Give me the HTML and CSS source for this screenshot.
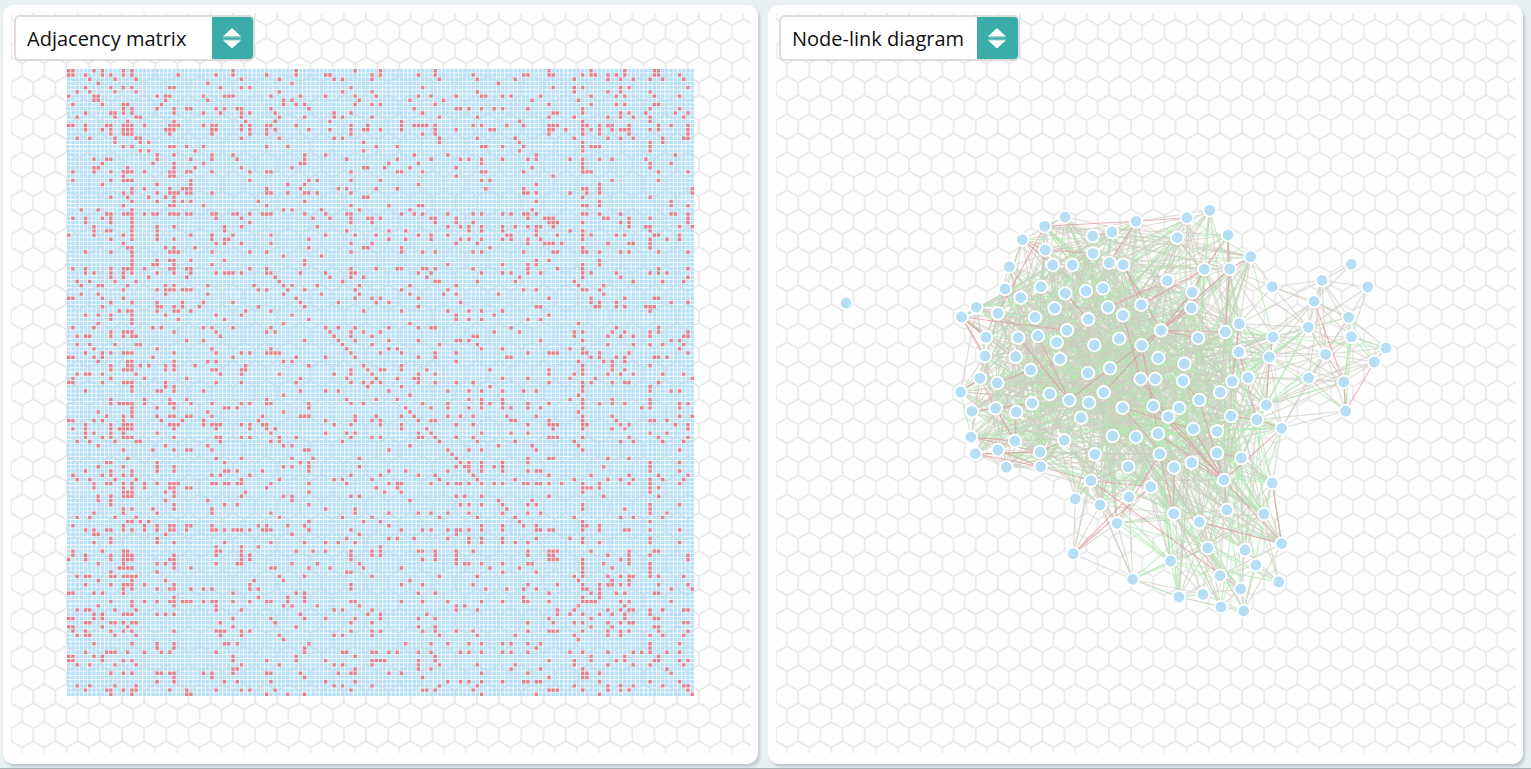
FILE: index.html
```html
<!DOCTYPE html>
<html lang="en">
<head>
<meta charset="utf-8">
<title>Graph views</title>
<link rel="stylesheet" href="styles.css">
</head>
<body>
<main class="views">
  <section class="panel">
    <div class="stage">
      <svg class="hexes" width="740" height="740">
        <defs>
          <pattern id="hex" width="22.19" height="38" patternUnits="userSpaceOnUse">
            <path class="hex-line" d="M0 0V6L11.095 12.5L22.19 6V0M11.095 12.5V25L0 31.5V38M11.095 25L22.19 31.5V38"/>
          </pattern>
        </defs>
        <rect width="740" height="740" fill="url(#hex)"/>
      </svg>
      <svg class="plot" id="matrix" width="740" height="740" viewBox="11 13 740 740"></svg>
      <div class="picker">
        <span class="picker-label">Adjacency matrix</span>
        <span class="picker-button"><svg width="20" height="22" viewBox="0 0 20 22"><path class="arrow" d="M10 1L19 9.4H1ZM1 13.2H19L10 21.5Z"/><path class="arrow-line" d="M1 10.2H19M1 12.8H19"/></svg></span>
      </div>
    </div>
  </section>
  <section class="panel">
    <div class="stage">
      <svg class="hexes" width="740" height="740"><rect width="740" height="740" fill="url(#hex)"/></svg>
      <svg class="plot" id="graph" width="740" height="740" viewBox="776 13 740 740"></svg>
      <div class="picker">
        <span class="picker-label">Node-link diagram</span>
        <span class="picker-button"><svg width="20" height="22" viewBox="0 0 20 22"><path class="arrow" d="M10 1L19 9.4H1ZM1 13.2H19L10 21.5Z"/><path class="arrow-line" d="M1 10.2H19M1 12.8H19"/></svg></span>
      </div>
    </div>
  </section>
</main>
<script src="app.js"></script>
</body>
</html>
```
FILE: styles.css
```css
body {
  margin: 0;
  height: 769px;
  box-sizing: border-box;
  overflow: hidden;
  background: #e8f0f2;
  border-bottom: 1px solid #a9b1b3;
  font-family: "Open Sans", "Noto Sans", sans-serif;
}
.views {
  display: flex;
  gap: 10px;
  padding: 5px 0 0 3px;
}
.panel {
  box-sizing: border-box;
  width: 755px;
  height: 759px;
  padding: 8px 7px 8px 8px;
  border-radius: 11px;
  background: #fefefe;
  box-shadow: 2px 3px 3px rgba(100, 115, 120, .3);
}
.stage {
  display: grid;
  width: 740px;
  height: 740px;
}
.stage > * {
  grid-area: 1 / 1;
}
.hex-line {
  fill: none;
  stroke: #e9e9e9;
  stroke-width: 1.7;
}
.picker {
  display: flex;
  box-sizing: border-box;
  width: 241px;
  height: 46px;
  margin: 2px 0 0 3px;
  border: 2px solid #dddcd7;
  border-radius: 6px;
  background: #fff;
  overflow: hidden;
  z-index: 1;
}
.picker-label {
  flex: 1;
  padding-left: 11px;
  font-size: 20px;
  line-height: 44px;
  color: #111;
  white-space: nowrap;
}
.picker-button {
  box-sizing: border-box;
  display: flex;
  align-items: center;
  justify-content: center;
  width: 41px;
  padding-right: 1px;
  background: #3aadaa;
}
.arrow {
  fill: #fff;
}
.arrow-line {
  stroke: #a3d9d7;
  stroke-width: .6;
}
.cell {
  fill: #b0ddf5;
  fill-opacity: .92;
}
.cell-set {
  fill: #e07b88;
  fill-opacity: .97;
}
.edge {
  fill: none;
  stroke-width: 1.15;
}
.edge-plain {
  stroke: rgba(206, 204, 193, .7);
}
.edge-green {
  stroke: rgba(178, 232, 178, .7);
}
.edge-red {
  stroke: rgba(228, 150, 160, .7);
}
.node {
  fill: #b6dff5;
  stroke: #fff;
  stroke-width: 1.8;
}
```
FILE: app.js
```js
// Column indices of the set cells, one matrix row per line.
const ROWS = `0 1 6 8 13 15 39 54 68 74 87 114 124 132 139 140
0 1 4 8 10 13 15 26 35 39 47 54 61 62 72 74 83 87 96 108 109 114 115 122 124 125 128 130 132 139 140 145
5 11 16 41 50 63 65 72 88 97 106 120 128 131 134 138 141 146
7 33 53 102
4 10 13 15 24 25 36 41 43 67 84 115 120 122 131 133 147
2 5 11 16 50 65 72 97 120 128 131 138
0 6 7 21 23 24 32 37 38 39 48 55 61 68 73 83 86 92 98 99 103 105 112 124 130 132 139 145
6 7 23 33 51 53 69 81 89 110 121
1 8 13 14 22 51 54 56 68 72 74 87 114 124 130 132 139 140
13 15 21 25 28 29 35 37 40 41 48 57 82 92 93 95 98 101 103 109 122 138 145
4 10 11 13 15 25 32 36 41 43 49 63 67 84 115 116 122 131 133 137 144 147
2 11 16 17 41 50 56 63 65 72 88 97 114 120 128 131 134 138 146
14 25 42 49 62 79 107 122 138
0 1 4 9 10 13 14 15 18 24 25 26 32 34 35 41 43 47 48 54 67 71 79 82 83 84 85 87 96 98 104 108 114 115 116 122 123 126 128 129 133 140 143 147
4 8 10 13 14 15 23 24 25 34 35 41 43 47 49 57 62 67 70 71 74 79 87 92 100 101 114 115 118 122 124 126 129 131 132 133 138 140 147
10 13 14 15 24 34 43 47 67 84 87 114 122 126 133 147
2 5 11 16 17 41 50 63 65 88 97 106 120 128 131 134 141 146 147
11 17 19 70 88 107 122 138 141
13 15 24 25 28 32 47 52 73 78 98 99 103 108 122 124 125 126 138
17 19 30 70 107 122 138
21 25 34 39 56 61 82 90 111 144
6 9 10 21 29 34 40 56 66 78 86 93 95 98 103 109 111 119 122 126 129 137
8 20 25 32 55 56 76 83 98 122 138 143
6 7 14 25 30 41 53 70 71 75 81 92 110 122 138
1 6 10 13 14 15 18 24 25 28 29 34 43 47 48 67 78 79 84 98 99 108 122 123 124 140 147
13 24 25 92 115
1 10 13 14 15 29 43 57 59 67 74 98 100 129 140
8 21 29 52 56 83 111 126
15 18 24 27 28 29 47 55 64 66 73 78 99 108 122 123 126 148
13 15 21 24 25 26 28 29 34 47 48 52 56 57 59 67 108 109 111 119 123 126 148
10 14 19 23 25 70 71 122 138
15 21 25 27 29 45 56 111 126 143
13 24 25 32 47 67 76 83 84 122 123 126 143 147
3 7 15 51 53 60 69 81 110
9 10 13 14 15 18 20 21 24 25 26 28 29 34 35 39 40 43 46 47 48 56 61 66 67 79 82 84 90 96 98 103 105 108 109 111 122 123 126 131 143 144 147
1 4 8 10 15 35 41 58 62 67 71 72 74 86 87 92 109 113 114 115 127 128 133 138 147
4 10 15 43 67 72 87 92 96 114 115 116 122 131 133 147
6 15 21 25 37 41 59 90 93 95 98 103 106 109 111 112 115 133 137 138 145 148
6 9 10 15 21 37 66 76 80 95 98 103 111 119 122 138
0 6 13 15 21 29 34 39 48 61 68 73 83 86 90 104 105 111 116 122 124 130 132 139 140 145
10 15 21 25 34 37 38 57 76 80 86 93 95 98 103 105 109 112 122 138 142 145
13 35 37 41 48 67 72 92 97 109 113 114 115 117 128 133 134 138
14 15 23 25 30 57 70 71 79 100 122 138
4 10 15 24 25 26 34 43 47 67 79 84 87 96 98 108 115 116 122 123 126 131 133 140 147
15 51 60
15 21 24 25 29 37 56 111 114 126
15 20 21 25 34 56 90 103 109 111 122 126
1 4 10 13 14 15 18 24 25 28 29 43 47 67 73 78 79 84 85 87 96 109 116 122 140 147
4 6 10 13 15 21 25 29 35 37 38 39 41 47 48 55 61 67 68 83 86 98 103 105 109 112 122 124 130 138 140 142
10 13 19 28 49 62 67 70 85 107 122 131 147
2 5 11 16 50 65 87 88 97 106 120 134 141 146
3 7 8 14 23 25 33 44 51 53 59 69 81 92 121 127
13 21 23 24 25 27 28 29 45 47 52 56 68 79 90 108 111 122 123 126
3 7 23 33 51 60 69 81 89 92 102 127
0 1 8 13 54 68 72 74 83 114 124 132 139 140
10 15 21 27 32 39 55 64 73 76 93 124 126 130 143 147
8 21 22 25 27 31 45 56 83 111 112 125 126 130 132 137 138 139
12 14 15 21 25 26 29 42 48 70 79 90 95 98 103 138
4 7 10 15 23 35 41 53 92 101 114
10 15 26 37 57 92 95 98 109 112
7 15 51 81 121
1 6 20 22 32 34 39 48 61 64 68 76 83 86 87 105 130 140
10 13 14 15 25 35 47 49 62 67 70 74 101 107 120 122 129 132 138 140 147
2 4 5 10 13 15 16 36 63 67 72 96 97 120 128 131 134 138 146 147
28 32 56 64 68 76 83 92 93 95 112 122 143 145
2 5 11 16 17 65 72 88 97 128 134 138 141 146
6 21 34 48 66 76 78 98 103 119 122 145
4 8 10 13 14 15 25 35 41 43 47 48 49 50 67 74 79 87 92 109 114 115 116 122 123 126 133 147
0 1 6 8 20 39 54 61 68 83 87 104 105 124 126 130 132 139 140 142
7 14 15 25 33 35 51 53 92 121 127 129 132
10 14 15 17 19 23 25 30 42 57 70 79 122 129 138
10 13 14 15 23 25 34 35 41 42 67 71 74 75 79 85 100 114 122 129 132
2 4 5 8 16 36 41 50 63 67 72 83 87 114 120 122 128 131 134 141 146
1 10 18 28 55 66 73 78 82 83 103 109 119 125 148
0 1 8 13 14 15 23 35 41 54 67 70 72 74 83 87 92 96 114 122 124 129 132 133 140
15 23 25 71 79 100 122 138
4 15 21 22 25 32 55 61 64 76 90 95 98 103 108 111 122 138 143 145
51 81 121
10 18 24 28 47 66 73 78 95 98 103 119 122 129 138
10 12 13 14 15 18 24 25 29 34 41 43 47 48 57 67 70 84 90 98 100 103 109 114 122 126 129 132 138 145 147
15 21 25 37 38 40 57 80 86 90 95 98 103 105 109 112 122 136 138 145
7 15 33 51 81 121
9 13 15 21 24 25 28 29 34 46 55 56 57 68 73 79 82 90 93 96 104 111 122 129 145 148
0 1 6 8 13 22 27 32 45 61 68 72 74 83 86 87 105 106 114 122 130 138 139 142
4 10 13 14 15 24 25 26 32 34 35 36 41 43 46 47 63 67 74 79 92 96 109 114 115 116 122 123 131 133 144 147
1 4 10 12 13 14 15 25 35 43 47 49 79 85 115 122 129 132 147
4 6 10 13 21 48 61 66 68 83 86 98 105 109 138 142
4 8 10 13 14 15 25 35 36 41 43 50 54 67 72 74 83 84 87 92 96 114 115 116 122 133 140 147
2 5 11 16 17 36 48 50 65 88 97 106 120 131 134 141 146
7 23 33 51 53 81 102 110 121
13 20 25 28 29 34 56 57 76 90 95 98 111 122 145
91
14 35 41 53 58 69 92 109 114 115 128 133
9 10 21 37 55 57 93 95 98 103 109 138 145
7 13 21 25 51 53 57 69 92 94 95 98 101 103 127 138
4 10 15 21 25 37 38 40 46 57 76 80 90 95 98 103 109 111 112 138 145
1 8 10 13 15 34 36 43 67 74 83 87 96 114 124 133 140 147
2 5 11 16 41 50 63 65 72 88 97 106 120 128 131 134 138 141 146
6 9 10 13 15 18 21 24 25 26 34 35 37 38 40 41 48 57 66 76 78 79 86 90 92 93 95 98 101 103 108 109 111 112 114 117 122 126 133 138 145
6 13 15 18 24 25 28 29 47 73 78 122 123 124 126 138 140
13 14 15 23 25 42 57 75 79 122 138
7 10 13 14 15 25 41 51 53 67 69 92 94 98 114 127 140
7 10 23 33 53 81 102 110
10 25 37 40 57 93 95 98 103 109 111 122 138 145
13 15 20 25 34 61 68 104 122 132 138
6 13 21 34 48 68 76 83 86 90 95 103 109 112 138 142
2 5 11 16 50 65 72 88 97 106 120 131 134 141
14 15 17 19 57 70 74 107 122 138
1 13 18 21 24 25 28 29 34 45 47 52 56 76 98 103 108 111 122 123 126
4 6 9 10 13 15 18 21 24 25 28 34 35 37 39 40 41 43 46 47 48 57 67 79 84 86 90 92 93 95 98 103 111 112 114 115 122 126 132 133 138 145
6 7 23 53 69 92
10 21 66 76 78 82 90 95 98 103 111 119 122 138
6 10 21 25 37 48 56 61 64 68 95 98 103 106 109 122 126 138 145
35 41 45 74
1 8 13 14 35 36 41 54 58 61 67 72 74 83 84 87 92 96 109 114 115 116 124 133 139 140
1 4 10 13 14 15 25 35 41 43 67 72 74 87 92 109 114 115 128 133 138 147
0 4 10 13 14 15 24 25 41 43 67 84 87 92 114 115 116 122 131 133 147
7 13 21 23 25 35 40 41 53 59 69 92 94 95 98 103 109 110 122 127 133 138
12 13 14 15 25 29 48 49 57 62 70 79 100 107 122 129 138
10 21 66 67 103 111 122 138
2 4 5 10 11 13 14 15 16 50 56 72 88 97 120 122 128 131 133 134 138 140 146
7 15 23 44 51 81 121 129 133
4 10 13 14 15 18 25 43 67 79 84 96 109 116 122 126 128 129 131 133 140 147
13 15 21 24 25 29 32 34 43 45 67 99 104 108 111 122 123 126 143 148
0 1 6 8 13 39 54 56 83 87 114 124 126 130 132 139 140
25 45 52 56 108 122 126
10 15 18 21 24 25 27 28 29 32 34 35 39 43 47 48 52 56 67 68 79 84 90 98 103 108 109 114 122 123 124 125 131 133 143
7 15 25 35 51 53 59 69 92 94 121 132
2 4 5 11 16 35 41 63 65 72 92 97 116 120 128 131 133 134 138 141 146 147
6 8 13 14 15 21 23 25 55 71 74 85 116 119 122 126 129 132 138
0 1 6 8 39 48 56 61 68 74 83 87 114 124 132 139 140
4 5 10 11 13 15 16 36 49 67 72 109 115 120 122 128 131 133 134 146 147
0 1 8 14 39 54 83 87 124 129 139 140
1 4 10 13 15 25 35 36 37 41 43 67 72 74 84 87 92 96 109 114 115 116 122 128 131 133 140 147
2 4 5 11 16 36 41 50 63 65 72 88 97 106 120 128 131 138 141 146
51 121
6 15 21 25 37 38 40 57 80 86 90 95 98 103 105 109 112 138 145
21 25 56 111 138
4 9 10 11 14 18 22 24 35 56 65 66 72 73 76 78 83 86 93 95 98 103 105 109 119 122 128 134 136 138 142 145
0 1 6 8 39 54 68 87 124 132 140
0 1 8 13 15 39 47 54 61 72 73 74 75 83 87 114 120 124 130 132 139 140 145 147
2 5 11 16 41 50 63 65 72 83 88 97 106 120 128 134 138 146
39 40 68 83 86 105 112 122 142
10 13 15 21 22 24 25 32 34 39 47 48 55 64 67 68 76 79 98 109 122 123 126 143
25 34 56 84 114 122 123
21 25 37 40 48 61 68 90 93 95 98 103 108 109 111 112 126 138 145
2 5 11 16 63 65 72 88 97 120 128 131 134 141 146 147
4 9 10 13 15 16 24 28 35 41 43 49 67 84 85 87 96 114 115 116 122 128 131 133 147
10 15 28 29 47 52 56 98 111 126 148`.split("\n").map(r => r.split(" ").map(Number));

// Node centres, x then y.
const NODES = `1065,217 1044.7,226.3 1022.3,239.7 1045.3,250 1052.7,265 1072.3,265 1009.3,266.7 1005,289 1020.7,297.7 1041,286.7 1065.3,293.3 1086,291 1103,288.3 1093,253.3 1092.7,236 1112,232 1136,221.3 1109.3,262.7 1123.3,264.7 1167.3,280.7 1177.3,237.7 976.3,307.3 961.7,317 998,313.3 1035,317.3 1054.7,308.3 1088.3,319.3 1108,307.3 1123,315.3 1141.3,304.7 1161,330.3 986,337.3 1018.3,337.7 1038,336 1056.7,342.3 1067,330.3 1094.3,345 1119.3,338.7 1141.7,345.3 1158.3,358 985,356 1015.7,356.7 1030.7,370 1060,359 1088,373 1110,368.3 1140.7,379 1155.3,379 980,378.3 997.3,383 960.7,392 1049.7,394 1069.3,400.3 1089,402.7 1103.7,392.3 1032,403.3 1122.7,407.7 1153.3,406
1187,217.7 1209.7,210.3 1228,235 1250.7,256.7 1204.3,269.3 1229.7,269 1192.3,292.3 1191.3,308 1239.3,323.7 1225.3,332 1198,338 1239,352 1184.3,363.7 1183,381 1232.3,381.3 1248,377.7 1220.3,392.3 1199.3,400 1272.3,286.7 1322,280.3 1351.3,264.3 1367.7,287 1314,301.3 1348.7,317.3 1308.3,327.3 1351.3,336.7 1273,337 1269.3,357 1386,348 1374.3,362 1325.7,354.3 1308.7,378 1343.7,382 1266.3,405
972,411.3 995.7,408.3 1016.3,412 1081,417.7 1168.3,416.7 971,437 975.3,453.7 998,450 1015,441 1040,452 1040.7,466.7 1006.3,467.3 1064.3,440.3 1112.7,436 1136,437 1158,433.7 1095,454.3 1159.7,454 1128.3,466.7 1091,480.7 1075.3,499 1100,505 1129,497 1150.7,486.7 1174,467.5 1117,523.3 1073.3,553.7 1132.7,579.3
1179.3,408 1231,416 1257,419.7 1281.7,428.3 1345.7,411 1193.3,429 1217,431.3 1217,453 1191.7,462.7 1241.3,458 1224,480 1272.3,483 1173.7,513.7 1199.3,522 1227,510 1264,514 1207.7,548 1245,550 1281.7,543.7 1256,565 1170.7,561 1220,575.7 1278.7,582 1240.7,589 1179,597 1203,594.3 1221,607 1243.7,611 846,303`
  .split(/\s+/).map(p => p.split(",").map(Number));

const PLAIN = `76-77 76-80 76-82 76-81 77-78 78-80 77-79 77-80 77-82 77-81 77-88 77-83 77-89 79-82 79-81 79-83 80-81 80-83 80-88 80-82 80-69 80-84 80-85 81-82 81-88 81-83 81-86 81-89 82-84 82-85 82-88 82-87 82-90 83-88 83-90 83-86 83-89 84-83 84-88 84-90 85-88 85-89 85-90 85-83 88-89 88-90 88-87 88-86 87-89 87-90 89-90 89-91 90-91 90-122 89-123 88-123 87-91 124-122 124-123 124-89 124-90 124-88 76-66 76-63 77-66 82-66 82-69 88-69 88-73 89-73 63-84 63-82 61-66 61-76 61-67 63-66 82-73 90-73 86-91 118-112 118-111 118-113 118-117 118-119 118-108 117-119 113-119 114-119 111-119 119-144 119-145 119-140 117-111 117-113 117-132 112-111 112-113`;
const GREEN = `61-84 82-91 82-72 82-122 82-85 83-87 81-87 83-86 83-124 81-124 88-91 90-91 89-91 85-82 84-86 84-81 84-73 85-72 90-124 90-83 124-85 119-140 119-144 119-136 119-133 117-140 117-136 113-140 111-140 112-111 131-138 131-122 84-72`;
const RED = `80-90 90-124 86-87 87-124 84-85 85-91 1-16 16-58 60-62 60-63 61-63 62-64 63-67 63-30 62-29 64-30 65-30 27-19 22-31 22-40 22-35 1-23 2-3 3-13 2-4 18-29 18-30 15-14 16-17 10-26 94-100 48-50 48-93 98-102 99-102 98-101 97-101 97-100 93-100 42-49 55-92 101-104 102-111 32-52 33-52 52-45 54-30 45-30 28-46 38-107 56-116 57-130 96-130 125-130 107-130 128-130 127-129 75-130 66-72 69-122 121-122 122-123 123-130 130-134 130-138 131-138 133-138 111-143 111-115 118-114 118-115 117-109 132-109 132-116 56-125 71-75 46-96 30-68 30-67`;

// The region that the dense part of the graph fills.
const HULL = [[956,317],[1020,235],[1063,211],[1211,205],[1256,256],[1247,315],[1278,333],[1287,428],[1276,483],[1287,544],[1283,586],[1245,617],[1173,602],[1165,562],[1160,525],[1117,528],[1070,503],[1075,484],[1042,473],[1003,473],[968,456],[953,392]];

const svgNode = (name, attrs) => {
  const el = document.createElementNS("http://www.w3.org/2000/svg", name);
  for (const key in attrs) el.setAttribute(key, attrs[key]);
  return el;
};

function drawMatrix(svg) {
  const pitch = 4.213, size = 3.4;
  let off = "", on = "";
  ROWS.forEach((row, r) => {
    const set = new Set(row);
    for (let c = 0; c < 149; c++) {
      const d = `M${(67 + c * pitch).toFixed(2)} ${(69.1 + r * pitch).toFixed(2)}h${size}v${size}h-${size}z`;
      if (set.has(c)) on += d; else off += d;
    }
  });
  svg.append(svgNode("path", { class: "cell", d: off }), svgNode("path", { class: "cell-set", d: on }));
}

function inside(x, y) {
  let hit = false;
  for (let i = 0, j = HULL.length - 1; i < HULL.length; j = i++) {
    const [ax, ay] = HULL[i], [bx, by] = HULL[j];
    if ((ay > y) !== (by > y) && x < (bx - ax) * (y - ay) / (by - ay) + ax) hit = !hit;
  }
  return hit;
}

function drawGraph(svg) {
  let seed = 4177;
  const random = () => (seed = (seed * 16807) % 2147483647) / 2147483647;
  const layer = svgNode("g", {});
  const line = (a, b, kind) => layer.append(svgNode("path", {
    class: `edge edge-${kind}`, d: `M${NODES[a].join(" ")}L${NODES[b].join(" ")}`
  }));
  for (let a = 0; a < 148; a++) {
    for (let b = a + 1; b < 148; b++) {
      const [ax, ay] = NODES[a], [bx, by] = NODES[b];
      const length = Math.hypot(ax - bx, ay - by);
      const chance = random(), tint = random();
      const mx = (ax + bx) / 2, my = (ay + by) / 2;
      const density = 0.36 + 0.22 * Math.exp(-Math.hypot(mx - 1110, my - 360) / 110);
      if (chance > density * Math.exp(-length / 130)) continue;
      let clear = true;
      for (let t = 0; t <= 1; t += 0.1) clear = clear && inside(ax + (bx - ax) * t, ay + (by - ay) * t);
      if (!clear) continue;
      const green = 0.2 + 0.42 * Math.exp(-Math.hypot(mx - 1175, my - 410) / 110);
      line(a, b, tint < green ? "green" : "plain");
    }
  }
  const each = (list, kind) => list.split(" ").forEach(p => line(...p.split("-").map(Number), kind));
  each(PLAIN, "plain");
  each(GREEN, "green");
  each(RED, "red");
  svg.append(layer);
  NODES.forEach(([x, y]) => svg.append(svgNode("circle", { class: "node", cx: x, cy: y, r: 6.3 })));
}

drawMatrix(document.getElementById("matrix"));
drawGraph(document.getElementById("graph"));
```
